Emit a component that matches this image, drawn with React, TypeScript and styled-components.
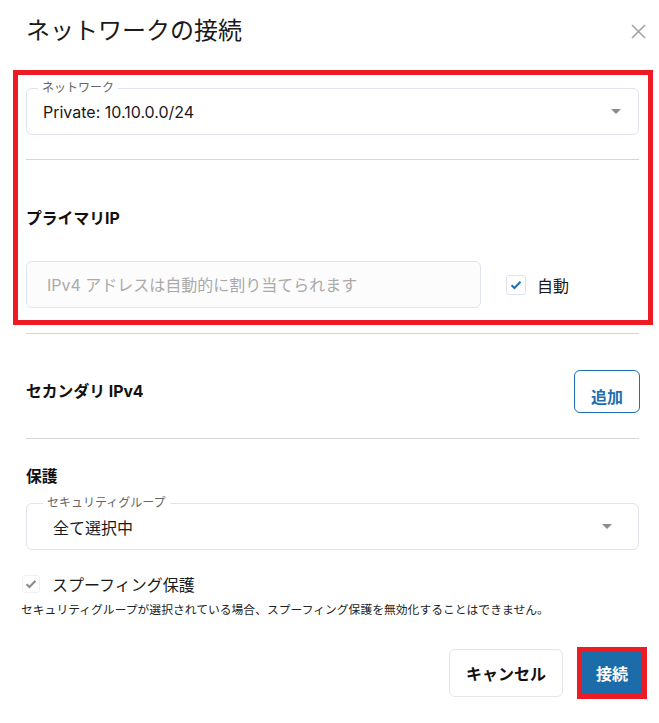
import React from 'react';
import styled, { createGlobalStyle } from 'styled-components';

const GlobalStyle = createGlobalStyle`
    body {
        margin: 0;
        background: #fff;
        font-family: "Inter", "Noto Sans CJK JP", sans-serif;
        color: #1a1a1a;
    }
`;

const Dialog = styled.div`
    width: 659px;
    box-sizing: border-box;
    padding: 0 20px 0 26px;
`;

const Header = styled.div`
    display: flex;
    align-items: center;
    justify-content: space-between;
    padding-top: 14px;
    margin-right: -7px;
`;

const Title = styled.h2`
    margin: 0;
    font-size: 24px;
    line-height: 34px;
    font-weight: 400;
    color: #1a1a1a;
`;

const CloseButton = styled.button`
    border: none;
    background: none;
    padding: 0;
    width: 15px;
    height: 15px;
    display: flex;
    cursor: pointer;
`;

const Highlight = styled.div`
    margin: 22px -14px 0 -13px;
    border: 5px solid #ed1c24;
    padding: 13px 9px 12px 8px;
`;

const Field = styled.div<{ $indent: number; $arrow: number }>`
    position: relative;
    height: 47px;
    box-sizing: border-box;
    border: 1px solid #e1e2ee;
    border-radius: 6px;
    display: flex;
    align-items: center;
    justify-content: space-between;
    padding: 0 ${p => p.$arrow}px 0 ${p => p.$indent}px;
    margin-top: ${p => p.$indent > 20 ? 15 : 0}px;
`;

const FieldLabel = styled.span<{ $left: number }>`
    position: absolute;
    top: -8px;
    left: ${p => p.$left}px;
    padding: 0 4px;
    background: #fff;
    font-size: 12px;
    line-height: 14px;
    color: #666;
`;

const FieldValue = styled.span`
    font-size: 16px;
    color: #1a1a1a;
`;

const Caret = styled.span`
    width: 0;
    height: 0;
    border-left: 5px solid transparent;
    border-right: 5px solid transparent;
    border-top: 5px solid #8c8c8c;
`;

const Divider = styled.hr<{ $top: number }>`
    margin: ${p => p.$top}px 0 0;
    border: none;
    border-top: 1px solid #d6d6d6;
`;

const SectionTitle = styled.h3<{ $top: number }>`
    margin: ${p => p.$top}px 0 0;
    font-size: 15.8px;
    line-height: 22px;
    font-weight: 700;
    color: #111;
`;

const InputRow = styled.div`
    display: flex;
    align-items: center;
    gap: 25px;
    margin-top: 31px;
`;

const TextInput = styled.input`
    flex: 0 0 455px;
    height: 47px;
    box-sizing: border-box;
    border: 1px solid #e0e3f0;
    border-radius: 6px;
    background: #fcfcfd;
    padding: 0 20px;
    font-family: inherit;
    font-size: 16px;
    outline: none;
    &::placeholder {
        color: #aaa;
    }
`;

const CheckLabel = styled.label<{ $faded?: boolean }>`
    display: flex;
    align-items: center;
    gap: ${p => p.$faded ? 12 : 11}px;
    font-size: 16px;
    color: #1a1a1a;
`;

const Box = styled.span<{ $faded?: boolean }>`
    width: ${p => p.$faded ? 18 : 20}px;
    height: ${p => p.$faded ? 18 : 20}px;
    box-sizing: border-box;
    border: 1px solid ${p => p.$faded ? '#efefef' : '#dde2ee'};
    border-radius: 3px;
    display: flex;
    align-items: center;
    justify-content: center;
`;

const Row = styled.div`
    display: flex;
    align-items: center;
    justify-content: space-between;
    margin-top: 36px;
`;

const OutlineButton = styled.button`
    width: 66px;
    height: 43px;
    margin-right: -1px;
    border: 1px solid #1f6fae;
    border-radius: 6px;
    background: #fff;
    color: #1f6fae;
    font-family: inherit;
    font-size: 16px;
    font-weight: 700;
    padding: 8px 0 0;
`;

const SpoofRow = styled.div`
    margin: 22px 0 0 -4px;
`;

const Help = styled.p`
    margin: 7px 0 0 -5px;
    font-size: 11.8px;
    line-height: 15px;
    color: #222;
    white-space: nowrap;
`;

const Footer = styled.div`
    display: flex;
    align-items: center;
    justify-content: flex-end;
    gap: 14px;
    margin: 29px -8px 0 0;
`;

const Button = styled.button<{ $primary?: boolean }>`
    height: ${p => p.$primary ? 52 : 48}px;
    width: ${p => p.$primary ? 70 : 114}px;
    box-sizing: border-box;
    border-radius: ${p => p.$primary ? 0 : 6}px;
    border: ${p => p.$primary ? '5px solid #ed1c24' : '1px solid #e6e6e6'};
    background: ${p => p.$primary ? '#1b6ca8' : '#fff'};
    color: ${p => p.$primary ? '#fff' : '#111'};
    font-family: inherit;
    font-size: 16px;
    font-weight: 700;
    padding: 0;
`;

const Check = ({ color }: { color: string }) => (
    <svg width="12" height="10" viewBox="0 0 12 10">
        <path d="M1.5 5.2 L4.5 8 L10.5 1.8" fill="none" stroke={color} strokeWidth="2" />
    </svg>
);

function App() {
    return (
        <Dialog>
            <GlobalStyle />
            <Header>
                <Title>ネットワークの接続</Title>
                <CloseButton>
                    <svg width="15" height="15" viewBox="0 0 15 15">
                        <path d="M1 1 L14 14 M14 1 L1 14" stroke="#a3a3a3" strokeWidth="1.6" />
                    </svg>
                </CloseButton>
            </Header>

            <Highlight>
                <Field $indent={16} $arrow={17}>
                    <FieldLabel $left={11}>ネットワーク</FieldLabel>
                    <FieldValue>Private: 10.10.0.0/24</FieldValue>
                    <Caret />
                </Field>
                <Divider $top={24} />
                <SectionTitle $top={48}>プライマリIP</SectionTitle>
                <InputRow>
                    <TextInput placeholder="IPv4 アドレスは自動的に割り当てられます" />
                    <CheckLabel>
                        <Box><Check color="#1f6fae" /></Box>
                        自動
                    </CheckLabel>
                </InputRow>
            </Highlight>

            <Divider $top={8} />
            <Row>
                <SectionTitle $top={0}>セカンダリ IPv4</SectionTitle>
                <OutlineButton>追加</OutlineButton>
            </Row>
            <Divider $top={25} />

            <SectionTitle $top={27}>保護</SectionTitle>
            <Field $indent={26} $arrow={26}>
                <FieldLabel $left={16}>セキュリティグループ</FieldLabel>
                <FieldValue>全て選択中</FieldValue>
                <Caret />
            </Field>

            <SpoofRow>
                <CheckLabel $faded>
                    <Box $faded><Check color="#8a8a8a" /></Box>
                    スプーフィング保護
                </CheckLabel>
            </SpoofRow>
            <Help>セキュリティグループが選択されている場合、スプーフィング保護を無効化することはできません。</Help>

            <Footer>
                <Button>キャンセル</Button>
                <Button $primary>接続</Button>
            </Footer>
        </Dialog>
    );
}

export default App;
